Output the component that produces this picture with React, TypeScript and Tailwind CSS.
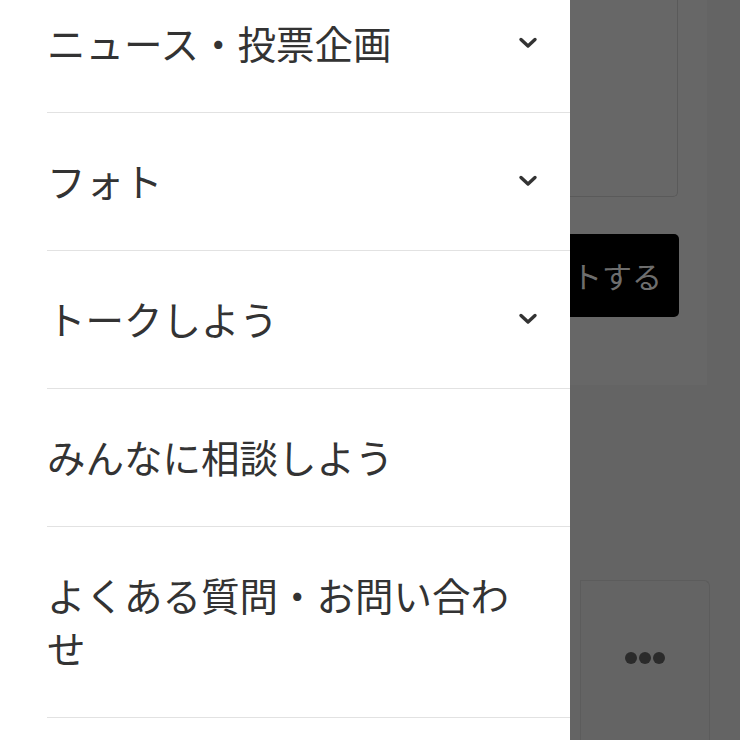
import React from 'react';

type MenuItem = {
  label: string;
  expandable?: boolean;
};

const items: MenuItem[] = [
  { label: 'ニュース・投票企画', expandable: true },
  { label: 'フォト', expandable: true },
  { label: 'トークしよう', expandable: true },
  { label: 'みんなに相談しよう' },
  { label: 'よくある質問・お問い合わせ' },
];

const Chevron: React.FC = () => (
  <svg width="20" height="14" viewBox="0 0 20 14" fill="none" className="shrink-0">
    <path d="M3 3.5 L10 10 L17 3.5" stroke="#333333" strokeWidth="3.4" strokeLinecap="round" strokeLinejoin="round" />
  </svg>
);

export default function App() {
  return (
    <div
      className="flex w-[740px] h-[740px] overflow-hidden bg-[#646464]"
      style={{ fontFamily: '"Noto Sans CJK JP", "Noto Sans", sans-serif' }}
    >
      {/* drawer */}
      <nav className="w-[570px] shrink-0 bg-white">
        <ul className="ml-[47px] mt-[-25px]">
          {items.map((item) => (
            <li
              key={item.label}
              className="flex items-center justify-between border-b border-[#e2e2e2] pt-[41px] pb-[43px] pr-[32px]"
            >
              <span className="text-[38.5px] leading-[53px] text-[#333333] pr-[10px]">{item.label}</span>
              {item.expandable && <Chevron />}
            </li>
          ))}
        </ul>
      </nav>

      {/* dimmed page behind the drawer */}
      <div className="flex-1 flex flex-col">
        <div className="w-[137px] h-[385px] bg-[#676767] flex flex-col">
          <div className="w-[108px] h-[197px] border-r border-b border-[#5a5a5a] rounded-br-[5px]" />
          <div className="mt-[37px] w-[109px] h-[83px] bg-black rounded-r-[5px] flex items-center">
            <span className="text-[30px] text-[#6e6e6e] ml-[2px]">トする</span>
          </div>
        </div>
        <div className="ml-[10px] mt-[195px] w-[130px] flex-1 border-t border-r border-l border-[#5c5c5c] rounded-tr-[6px] flex justify-center pt-[71px]">
          <div className="flex gap-[2px] h-fit">
            <span className="w-[12px] h-[12px] rounded-full bg-[#2b2b2b]" />
            <span className="w-[12px] h-[12px] rounded-full bg-[#2b2b2b]" />
            <span className="w-[12px] h-[12px] rounded-full bg-[#2b2b2b]" />
          </div>
        </div>
      </div>
    </div>
  );
}
